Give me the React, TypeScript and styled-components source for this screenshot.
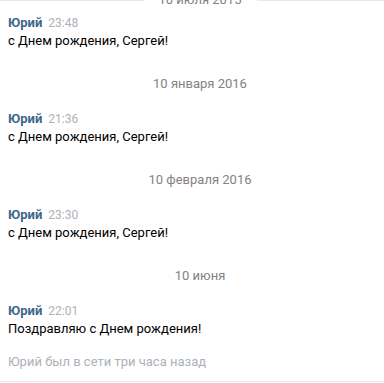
import React from 'react';
import styled, { createGlobalStyle } from 'styled-components';

const GlobalStyle = createGlobalStyle`
  html, body {
    margin: 0;
    padding: 0;
    background: #fff;
    overflow: hidden;
  }
  body {
    font-family: Roboto, "Open Sans", "DejaVu Sans", sans-serif;
    font-size: 13px;
    -webkit-font-smoothing: antialiased;
  }
`;

const Page = styled.div`
  width: 384px;
  height: 383px;
  overflow: hidden;
  display: flex;
  flex-direction: column;
`;

const Log = styled.div`
  width: 400px;
  flex: 1;
  display: flex;
  flex-direction: column;
`;

const StickyDate = styled.div`
  display: flex;
  align-items: center;
  margin-top: -9px;
  margin-bottom: 5px;
  line-height: 18px;
  color: #828282;
  &::before,
  &::after {
    content: '';
    flex: 1;
    height: 1px;
    background: #e7e8ec;
  }
  span {
    padding: 0 15px;
  }
`;

const DateRow = styled.div`
  text-align: center;
  line-height: 18px;
  color: #828282;
  margin: 25px 0 17px;
`;

const Message = styled.div`
  padding: 0 8px;
  line-height: 18px;
`;

const Head = styled.div`
  display: flex;
  align-items: baseline;
  gap: 6px;
`;

const Author = styled.span`
  font-weight: 700;
  color: #42648b;
`;

const Time = styled.span`
  font-size: 12px;
  color: #adb1b8;
`;

const Text = styled.div`
  color: #000;
`;

const Status = styled.div`
  padding: 15px 8px 0;
  line-height: 18px;
  color: #adb1b8;
`;

const Footer = styled.div`
  height: 1px;
  margin-bottom: 1px;
  background: #e7e8ec;
`;

const messages = [
  { date: null, time: '23:48', text: 'с Днем рождения, Сергей!' },
  { date: '10 января 2016', time: '21:36', text: 'с Днем рождения, Сергей!' },
  { date: '10 февраля 2016', time: '23:30', text: 'с Днем рождения, Сергей!' },
  { date: '10 июня', time: '22:01', text: 'Поздравляю с Днем рождения!' },
];

export default function App() {
  return (
    <Page>
      <GlobalStyle />
      <Log>
        <StickyDate>
          <span>10 июля 2015</span>
        </StickyDate>
        {messages.map((m) => (
          <React.Fragment key={m.time}>
            {m.date && <DateRow>{m.date}</DateRow>}
            <Message>
              <Head>
                <Author>Юрий</Author>
                <Time>{m.time}</Time>
              </Head>
              <Text>{m.text}</Text>
            </Message>
          </React.Fragment>
        ))}
        <Status>Юрий был в сети три часа назад</Status>
      </Log>
      <Footer />
    </Page>
  );
}
